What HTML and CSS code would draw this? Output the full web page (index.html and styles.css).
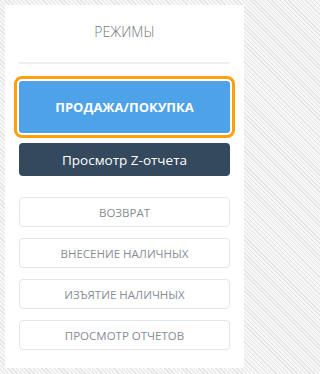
FILE: index.html
```html
<!DOCTYPE html>
<html lang="ru">
<head>
<meta charset="utf-8">
<link rel="stylesheet" href="styles.css">
</head>
<body>
<div class="page">
  <div class="panel">
    <div class="title">РЕЖИМЫ</div>
    <div class="rule"></div>
    <div class="btn btn-primary">ПРОДАЖА/ПОКУПКА</div>
    <div class="btn btn-dark">Просмотр Z-отчета</div>
    <div class="list">
      <div class="btn btn-outline">ВОЗВРАТ</div>
      <div class="btn btn-outline">ВНЕСЕНИЕ НАЛИЧНЫХ</div>
      <div class="btn btn-outline">ИЗЪЯТИЕ НАЛИЧНЫХ</div>
      <div class="btn btn-outline">ПРОСМОТР ОТЧЕТОВ</div>
    </div>
  </div>
</div>
</body>
</html>
```
FILE: styles.css
```css
html, body {
  margin: 0;
  height: 100%;
}
body {
  font-family: "Open Sans", "Liberation Sans", sans-serif;
  background-color: #f6f6f6;
  background-image: repeating-linear-gradient(45deg, #e4e4e4 0, #e4e4e4 1px, #f7f7f7 1px, #f7f7f7 3px);
}
.page {
  width: 249px;
  padding: 5px 5px 0 5px;
  box-sizing: border-box;
}
.panel {
  background: #fff;
  height: 363px;
  box-sizing: border-box;
  padding: 17px 14px 0 14px;
  display: flex;
  flex-direction: column;
}
.title {
  text-align: center;
  font-size: 14px;
  line-height: 20px;
  color: #72777f;
  font-weight: 300;
}
.rule {
  height: 2px;
  background: #eeeeee;
  margin-top: 20px;
}
.btn {
  display: flex;
  align-items: center;
  justify-content: center;
  border-radius: 4px;
  box-sizing: border-box;
}
.btn-primary {
  margin-top: 17px;
  height: 52px;
  background: #4da2e8;
  color: #fff;
  font-weight: 700;
  font-size: 13px;
  outline: 3px solid #ff9f0a;
  outline-offset: 2px;
  border-radius: 3px;
}
.btn-dark {
  margin-top: 10px;
  height: 33px;
  background: #34495e;
  color: #fff;
  font-size: 13.5px;
}
.list {
  margin-top: 21px;
  display: flex;
  flex-direction: column;
  gap: 11px;
}
.btn-outline {
  height: 30px;
  border: 1px solid #dfe6ee;
  color: #878c96;
  font-size: 11.5px;
}
```
